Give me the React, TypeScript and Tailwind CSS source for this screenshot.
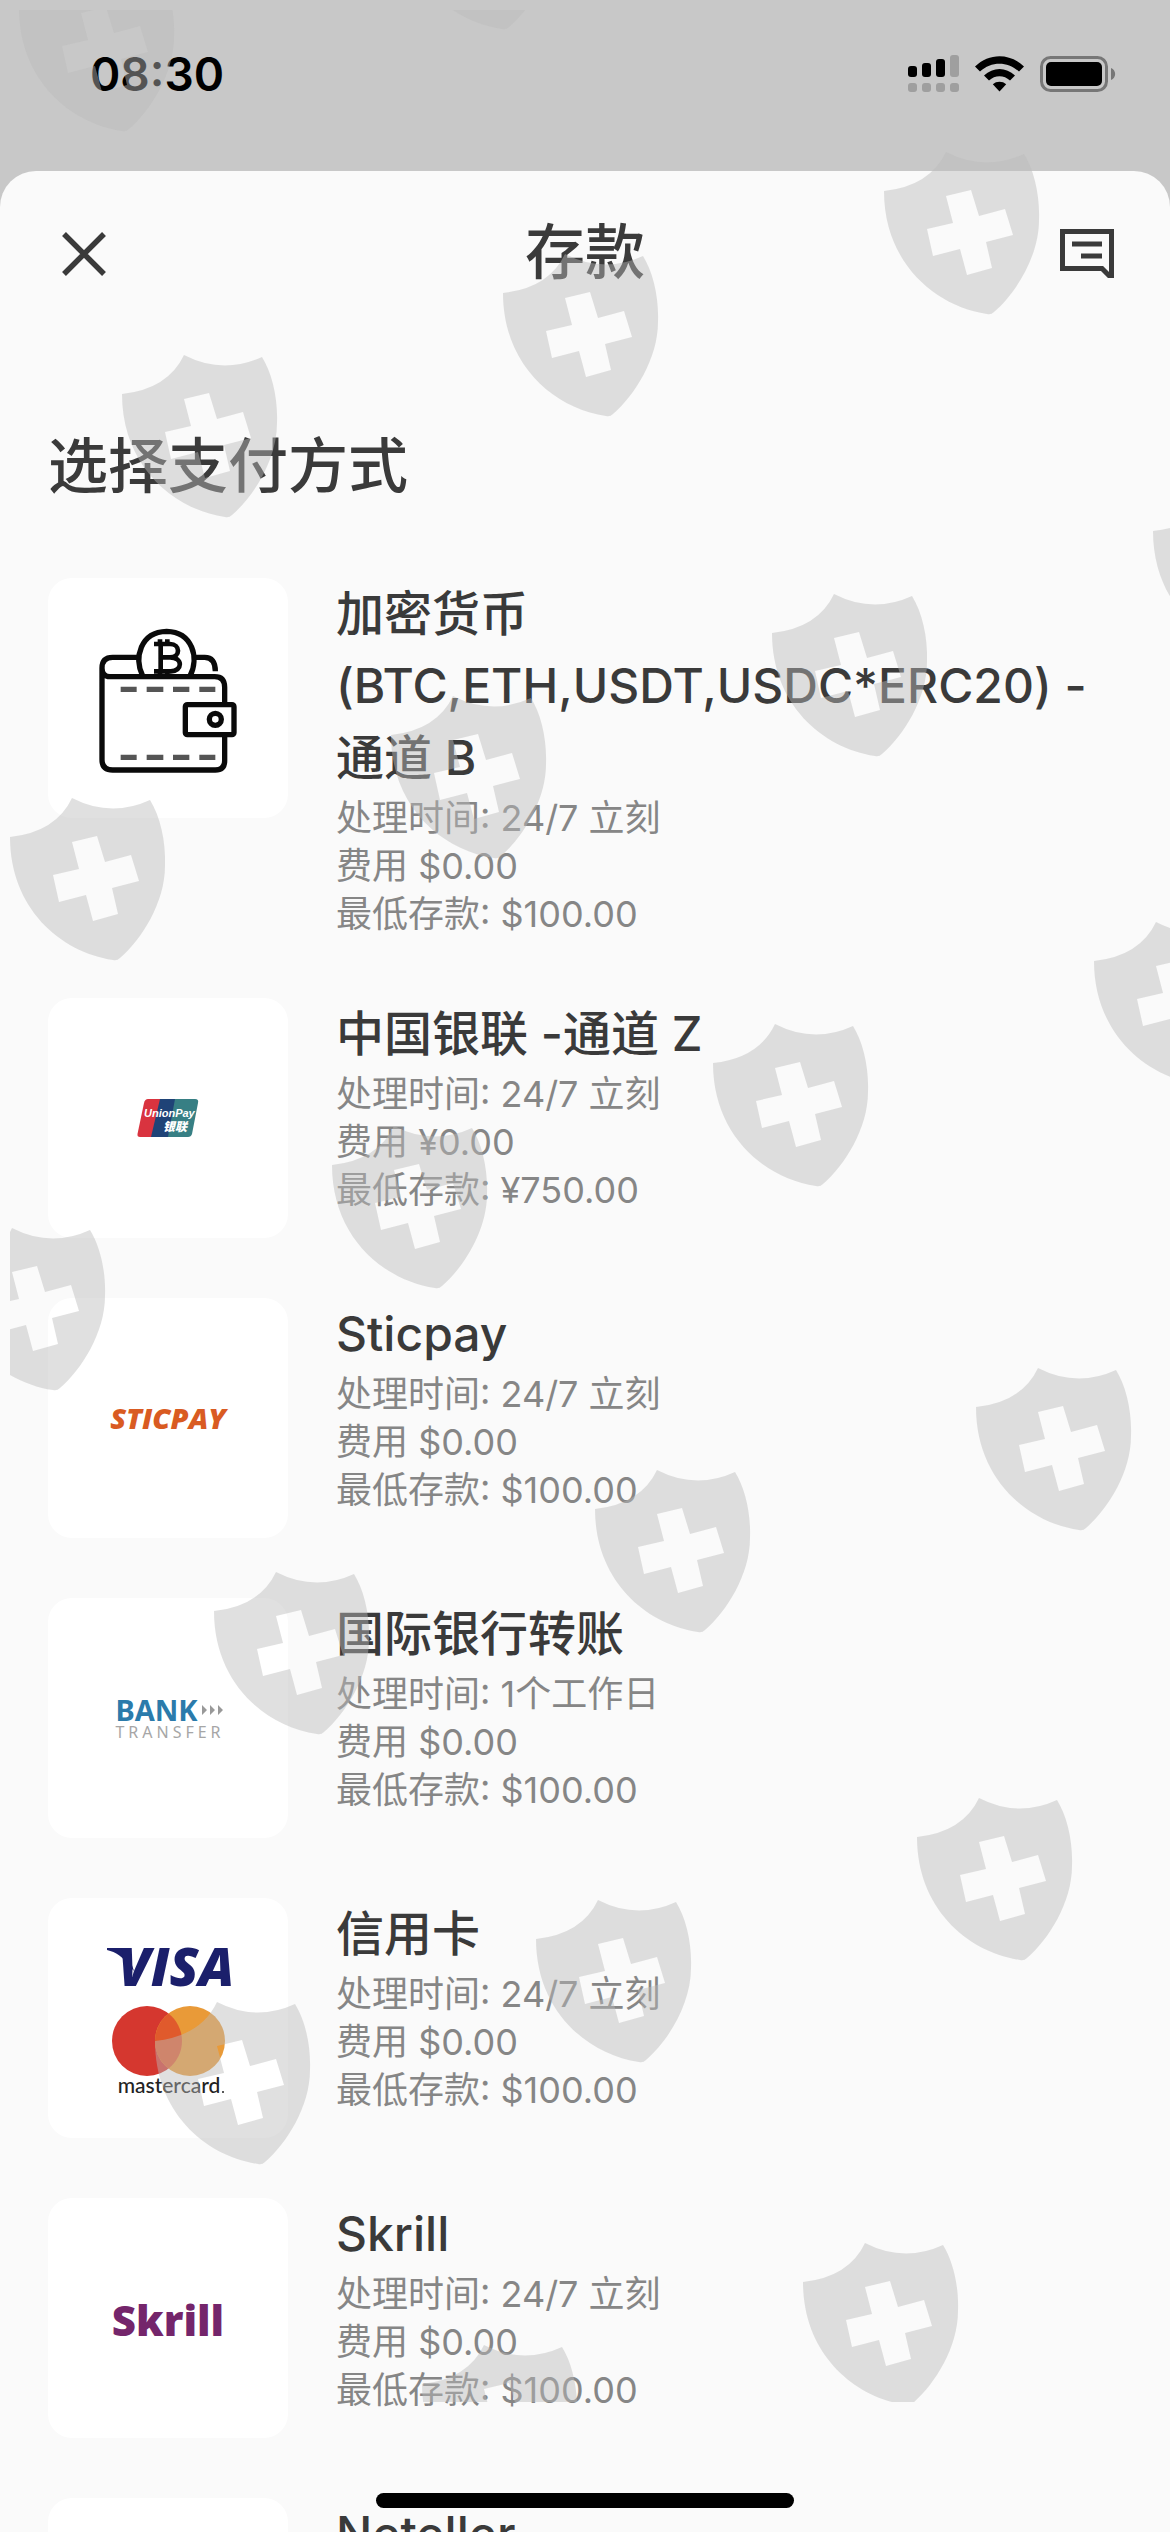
import type { ReactNode } from "react";

type Method = {
  name: string;
  time: string;
  fee: string;
  min: string;
  logo: ReactNode;
};

function SignalIcon() {
  const bars = [
    { x: 0, y: 11, h: 11, on: true },
    { x: 14, y: 8, h: 14, on: true },
    { x: 28, y: 4, h: 18, on: true },
    { x: 42, y: 0, h: 22, on: false },
  ];
  return (
    <svg width="51" height="38" viewBox="0 0 51 38" aria-label="信号">
      {bars.map((b) => (
        <g key={b.x}>
          <rect x={b.x} y={b.y} width="9" height={b.h} rx="3" fill={b.on ? "#000" : "#9f9f9f"} />
          <rect x={b.x} y="28" width="9" height="9" rx="3" fill="#9f9f9f" />
        </g>
      ))}
    </svg>
  );
}

function WifiIcon() {
  return (
    <svg width="49" height="36" viewBox="0 0 49 36" aria-label="Wi-Fi">
      <path d="M0 10.5C14 -3.3 35 -3.3 49 10.5L44 15.6C33 5 16 5 5 15.600Z" />
      <path d="M9 19.500C18 10.800 31 10.800 40 19.500L35 24.500C29 18.800 20 18.800 14 24.500Z" />
      <path d="M17.800 28.300C21.500 25 27.500 25 31.200 28.300L24.500 35.500Z" />
    </svg>
  );
}

function BatteryIcon() {
  return (
    <svg width="76" height="36" viewBox="0 0 76 36" aria-label="电池">
      <rect x="1.500" y="1.500" width="65" height="33" rx="9" fill="none" stroke="#777" strokeWidth="3" />
      <rect x="6" y="6" width="56" height="24" rx="5" />
      <path d="M71 12C76.500 14 76.500 22 71 24Z" fill="#777" />
    </svg>
  );
}

function CloseIcon() {
  return (
    <svg width="56" height="44" viewBox="-6 0 56 44" fill="none" stroke="#3a3a3a" strokeWidth="5.500">
      <path d="M2 2L42 42M42 2L2 42" />
    </svg>
  );
}

function ChatIcon() {
  return (
    <svg width="54" height="50" viewBox="0 0 54 50" fill="none" stroke="#3a3a3a" strokeWidth="5">
      <path d="M2.500 2.500H51.500V46.500H49L42 39.500H2.500Z" />
      <path d="M12 15H42M21 27H42" />
    </svg>
  );
}

function WalletLogo() {
  return (
    <svg width="160" height="160" viewBox="0 0 480 480" fill="none" stroke="#0a0a0a" strokeWidth="16">
      <path d="M42 150V425Q42 456 74 456H382Q410 456 410 428V352M410 258V208Q410 176 380 176H66Q42 176 42 150Q42 118 74 118H148M320 118H350Q382 118 382 160" />
      <path d="M164 174C138 120 156 42 236 40C314 42 334 120 306 174" />
      <path d="M198 78H246C278 78 278 118 246 118H220M246 118C286 118 284 160 248 160H198M218 78V160M216 64V78M238 64V78M216 160V174M238 160V174" strokeWidth="14" />
      <rect x="292" y="260" width="146" height="90" rx="6" />
      <circle cx="382" cy="304" r="18" />
      <path d="M98 214H146M176 214H226M255 214H304M334 214H382M98 418H146M176 418H226M255 418H304M334 418H382" stroke="#555" />
    </svg>
  );
}

function UnionPayLogo() {
  return (
    <svg width="62" height="38" viewBox="0 0 62 38" className="overflow-visible">
      <path d="M11 0H26L18 38H3Q0 38 0.500 35L7 4Q8 0 11 0Z" fill="#d9333f" />
      <path d="M23 0H42L34 38H14Z" fill="#1f4377" />
      <path d="M38 0H58Q62 0 61 4L55 35Q54 38 51 38H31Z" fill="#377f84" />
      <text x="7" y="18" fontSize="11" fontStyle="italic" fontWeight="700" fill="#fff" className="font-['Liberation_Sans']">
        UnionPay
      </text>
      <text x="26" y="32" fontSize="12" fontStyle="italic" fontWeight="900" fill="#fff" className="font-['Noto_Sans_CJK_SC']">
        银联
      </text>
    </svg>
  );
}

function SticpayLogo() {
  return (
    <span className="font-['Open_Sans',sans-serif] text-[29px] leading-8 font-extrabold text-[#d95b22] italic">
      STICPAY
    </span>
  );
}

function BankLogo() {
  return (
    <span className="flex flex-col pl-1 font-['Noto_Sans',sans-serif]">
      <span className="flex items-center gap-1 text-[29px] leading-7 font-bold text-[#2b7bab]">
        BANK
        <svg width="22" height="10" viewBox="0 0 22 10" fill="#999">
          <path d="M0 0L5 5L0 10ZM8 0L13 5L8 10ZM16 0L21 5L16 10Z" />
        </svg>
      </span>
      <span className="text-base leading-4 tracking-[4px] text-[#a6a6a6]">TRANSFER</span>
    </span>
  );
}

function CardsLogo() {
  return (
    <svg width="124" height="144" viewBox="0 0 124 144" className="overflow-visible">
      <path d="M1 2H20L28 25L22 19C17 11 10 6 1 4Z" fill="#1b1f6b" />
      <text x="12" y="40" fontSize="53" fontStyle="italic" fontWeight="800" fill="#1b1f6b" className="font-['Open_Sans']">
        VISA
      </text>
      <circle cx="41" cy="95" r="35" fill="#d5372f" />
      <circle cx="84" cy="95" r="35" fill="#e99a38" />
      <path d="M62.500 67.400A35 35 0 0 1 62.500 122.600A35 35 0 0 1 62.500 67.400Z" fill="#e05a2c" />
      <text x="63" y="147" fontSize="21" fontWeight="500" fill="#222" textAnchor="middle" className="font-['Lato']">
        mastercard
      </text>
      <circle cx="117" cy="146" r="1" fill="#222" />
    </svg>
  );
}

function SkrillLogo() {
  return (
    <span className="pt-1 font-['Noto_Sans',sans-serif] text-[42px] leading-[48px] font-black text-[#74256b]">
      Skrill
    </span>
  );
}

const methods: Method[] = [
  {
    name: "加密货币(BTC,ETH,USDT,USDC*ERC20) - 通道 B",
    time: "24/7 立刻",
    fee: "$0.00",
    min: "$100.00",
    logo: <WalletLogo />,
  },
  { name: "中国银联 -通道 Z", time: "24/7 立刻", fee: "¥0.00", min: "¥750.00", logo: <UnionPayLogo /> },
  { name: "Sticpay", time: "24/7 立刻", fee: "$0.00", min: "$100.00", logo: <SticpayLogo /> },
  { name: "国际银行转账", time: "1个工作日", fee: "$0.00", min: "$100.00", logo: <BankLogo /> },
  { name: "信用卡", time: "24/7 立刻", fee: "$0.00", min: "$100.00", logo: <CardsLogo /> },
  { name: "Skrill", time: "24/7 立刻", fee: "$0.00", min: "$100.00", logo: <SkrillLogo /> },
  { name: "Neteller", time: "24/7 立刻", fee: "$0.00", min: "$100.00", logo: null },
];

const shields = [
  [19, -31],
  [399, -133],
  [884, 152],
  [503, 254],
  [122, 355],
  [1153, 492],
  [772, 594],
  [391, 696],
  [10, 798],
  [1094, 922],
  [713, 1024],
  [332, 1126],
  [-50, 1228],
  [976, 1368],
  [595, 1470],
  [214, 1572],
  [917, 1798],
  [536, 1900],
  [155, 2002],
  [803, 2243],
  [422, 2345],
];

function Watermark() {
  return (
    <svg className="pointer-events-none absolute inset-0 h-full w-full" aria-hidden="true">
      <defs>
        <clipPath id="watermark-area">
          <rect x="10" y="10" width="1160" height="2392" />
        </clipPath>
        <path
          id="shield"
          fillRule="evenodd"
          d="M0 39Q46 34 62 0Q101 20 140 2C150 18 156 43 155 68C155 105 131 142 110 160Q107 163 103 162C50 154 0 110 0 39ZM62 44L87 38L95 64L121 57L129 83L102 90L108 116L83 123L76 97L49 104L43 77L69 71Z"
        />
      </defs>
      <g clipPath="url(#watermark-area)" fill="#bababa" fillOpacity="0.45">
        {shields.map(([x, y]) => (
          <use key={`${x},${y}`} href="#shield" x={x} y={y} />
        ))}
      </g>
    </svg>
  );
}

function MethodRow({ method }: { method: Method }) {
  return (
    <li>
      <button type="button" className="flex w-full items-start gap-12 text-left">
        <span className="flex size-60 shrink-0 items-center justify-center rounded-3xl bg-white">{method.logo}</span>
        <span className="flex min-w-0 flex-1 flex-col">
          <span className="text-5xl leading-[72px] font-medium text-[#3a3a3a]">{method.name}</span>
          <span className="text-4xl leading-[48px] text-[#868686]">处理时间: {method.time}</span>
          <span className="text-4xl leading-[48px] text-[#868686]">费用 {method.fee}</span>
          <span className="text-4xl leading-[48px] text-[#868686]">最低存款: {method.min}</span>
        </span>
      </button>
    </li>
  );
}

export default function App() {
  return (
    <div className="relative flex h-screen flex-col overflow-hidden bg-[#c8c8c8] font-['Inter','Noto_Sans_CJK_SC',sans-serif]">
      <div className="flex h-[171px] shrink-0 items-start justify-between pt-[50px] pr-[54px] pl-[90px]">
        <span className="text-[46px] leading-[48px] font-semibold text-black">08:30</span>
        <div className="flex h-12 items-center gap-4">
          <SignalIcon />
          <WifiIcon />
          <BatteryIcon />
        </div>
      </div>

      <main className="min-h-0 flex-1 overflow-hidden rounded-t-[36px] bg-[#fafafa]">
        <header className="grid h-[166px] grid-cols-3 items-center px-14">
          <button type="button" aria-label="关闭" className="justify-self-start">
            <CloseIcon />
          </button>
          <h1 className="justify-self-center pb-1 text-[60px] leading-[72px] font-medium text-[#3a3a3a]">存款</h1>
          <button type="button" aria-label="聊天" className="justify-self-end">
            <ChatIcon />
          </button>
        </header>

        <h2 className="mt-[93px] px-12 text-[60px] leading-[72px] font-medium text-[#3a3a3a]">选择支付方式</h2>

        <ul className="mt-[76px] flex flex-col gap-[60px] px-12">
          {methods.map((m) => (
            <MethodRow key={m.name} method={m} />
          ))}
        </ul>
      </main>

      <Watermark />
      <div className="absolute bottom-6 left-1/2 h-[15px] w-[418px] -translate-x-1/2 rounded-full bg-black" />
    </div>
  );
}
